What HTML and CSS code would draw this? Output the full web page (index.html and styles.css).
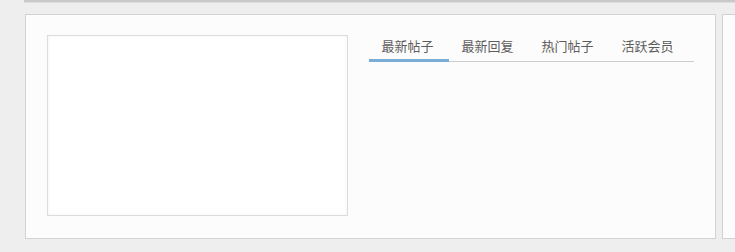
FILE: index.html
```html
<!DOCTYPE html>
<html lang="zh">
<head>
<meta charset="utf-8">
<title>论坛</title>
<link rel="stylesheet" href="styles.css">
</head>
<body>
<div class="page">
  <div class="top-strip"></div>
  <div class="row">
    <div class="card main">
      <div class="slide-box"></div>
      <div class="tab-panel">
        <ul class="tabs">
          <li class="tab active">最新帖子</li>
          <li class="tab">最新回复</li>
          <li class="tab">热门帖子</li>
          <li class="tab">活跃会员</li>
        </ul>
      </div>
    </div>
    <div class="card side"></div>
  </div>
</div>
</body>
</html>
```

FILE: styles.css
```css
html, body {
  margin: 0;
  padding: 0;
  background: #eeeeee;
  font-family: "Noto Sans CJK SC", "Noto Sans", sans-serif;
  overflow: hidden;
}
.page {
  padding-left: 24px;
  overflow: hidden;
}
.top-strip {
  height: 2px;
  background: #c9c9c9;
  border-bottom: 1px solid #dedede;
}
.row {
  display: flex;
  gap: 6px;
  margin-top: 11px;
  overflow: hidden;
}
.card {
  flex-shrink: 0;
  box-sizing: border-box;
  height: 225px;
  background: #fcfcfc;
  border: 1px solid #d2d2d2;
  box-shadow: 0 1px 0 #e2e2e2;
}
.card.main {
  margin-left: 1px;
  width: 691px;
  display: flex;
  padding: 20px 21px 0 21px;
  gap: 21px;
}
.card.side {
  width: 120px;
}
.slide-box {
  flex-shrink: 0;
  box-sizing: border-box;
  width: 301px;
  height: 181px;
  background: #ffffff;
  border: 1px solid #dcdcdc;
  box-shadow: inset 0 0 3px #f0f0f0;
}
.tab-panel {
  flex: 1;
}
.tabs {
  list-style: none;
  margin: 0;
  padding: 0;
  display: flex;
  border-bottom: 1px solid #cccccc;
}
.tab {
  box-sizing: border-box;
  width: 80px;
  height: 27px;
  padding: 0 3px 0 0;
  line-height: 22px;
  text-align: center;
  font-size: 13px;
  color: #5c5c5c;
  border-bottom: 3px solid transparent;
  margin-bottom: -1px;
}
.tab.active {
  border-bottom-color: #7aadd4;
}
```
